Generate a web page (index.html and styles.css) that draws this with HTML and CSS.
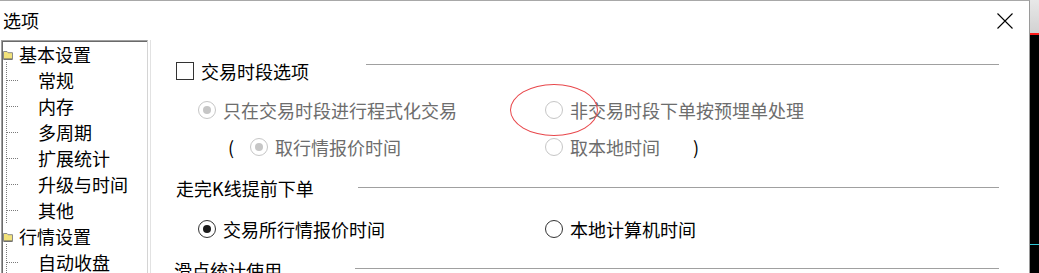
FILE: index.html
```html
<!DOCTYPE html>
<html lang="zh-CN">
<head>
<meta charset="utf-8">
<title>选项</title>
<link rel="stylesheet" href="styles.css">
</head>
<body>
<div class="screen">
  <div class="window">
    <header class="titlebar">
      <span class="title">选项</span>
      <span class="close">
        <svg width="16" height="16" viewBox="0 0 16 16"><path d="M0.5 0.5 L15.5 15.5 M15.5 0.5 L0.5 15.5" stroke="#000" stroke-width="1.1" fill="none"/></svg>
      </span>
    </header>
    <div class="main">
      <div class="tree-wrap">
        <div class="tree">
          <div class="node">
            <svg class="folder" width="10" height="10" viewBox="0 0 10 10"><path d="M0.5 1.5h3.5l1 1.2h4.5v6.8h-9z" fill="#f2e27a" stroke="#8a8a8a" stroke-width="1"/><path d="M1 9h8" stroke="#5a5a5a"/></svg>
            <span>基本设置</span>
          </div>
          <ul class="children">
            <li>常规</li>
            <li>内存</li>
            <li>多周期</li>
            <li>扩展统计</li>
            <li>升级与时间</li>
            <li>其他</li>
          </ul>
          <div class="node">
            <svg class="folder" width="10" height="10" viewBox="0 0 10 10"><path d="M0.5 1.5h3.5l1 1.2h4.5v6.8h-9z" fill="#f2e27a" stroke="#8a8a8a" stroke-width="1"/><path d="M1 9h8" stroke="#5a5a5a"/></svg>
            <span>行情设置</span>
          </div>
          <ul class="children">
            <li>自动收盘</li>
          </ul>
        </div>
      </div>
      <div class="content">
        <div class="group-head g1">
          <span class="checkbox"></span>
          <span class="head-label hl1">交易时段选项</span>
          <span class="rule"></span>
        </div>
        <div class="opt-row ra">
          <div class="opt"><span class="radio disabled checked"></span><span class="lbl disabled">只在交易时段进行程式化交易</span></div>
          <div class="opt"><span class="radio disabled"></span><span class="lbl disabled">非交易时段下单按预埋单处理</span></div>
        </div>
        <div class="opt-row rb">
          <div class="opt"><span class="paren open">(</span><span class="radio disabled checked"></span><span class="lbl disabled">取行情报价时间</span></div>
          <div class="opt"><span class="radio disabled"></span><span class="lbl disabled">取本地时间</span><span class="paren close-p">)</span></div>
        </div>
        <div class="group-head g2">
          <span class="head-label hl2">走完K线提前下单</span>
          <span class="rule"></span>
        </div>
        <div class="opt-row rc">
          <div class="opt"><span class="radio checked"></span><span class="lbl">交易所行情报价时间</span></div>
          <div class="opt"><span class="radio"></span><span class="lbl">本地计算机时间</span></div>
        </div>
        <div class="group-head g3">
          <span class="head-label hl3">滑点统计使用</span>
          <span class="rule"></span>
        </div>
        <div class="annot"></div>
      </div>
    </div>
  </div>
  <div class="backdrop">
    <div class="bd-top"></div>
    <div class="bd-red"></div>
    <div class="bd-black b1"></div>
    <div class="bd-cyan"></div>
    <div class="bd-black b2"></div>
  </div>
</div>
</body>
</html>
```
FILE: styles.css
```css
* { box-sizing: border-box; }
html, body {
  margin: 0;
  padding: 0;
  width: 1039px;
  height: 273px;
  overflow: hidden;
  background: #fff;
}
body {
  font-family: "Noto Sans CJK SC", "Microsoft YaHei", sans-serif;
  font-size: 18px;
  color: #000;
}
.screen {
  display: flex;
  width: 1039px;
  height: 273px;
}
.window {
  width: 1030px;
  flex: 0 0 1030px;
  height: 273px;
  border-top: 1px solid #a8a8a8;
  border-right: 1px solid #9a9a9a;
  background: #fff;
  display: flex;
  flex-direction: column;
}
.titlebar {
  height: 39px;
  flex: 0 0 39px;
  display: flex;
  align-items: center;
  justify-content: space-between;
  padding-left: 3px;
  padding-right: 16px;
}
.title {
  line-height: 26px;
  margin-top: -2px;
}
.close {
  display: flex;
  width: 16px;
  height: 16px;
  margin-top: 0px;
}
.main {
  flex: 1;
  display: flex;
  min-height: 0;
}
.tree-wrap {
  margin-left: 1px;
  width: 150px;
  flex: 0 0 150px;
  padding-right: 2px;
  border-right: 1px solid #e2e2e2;
}
.tree {
  width: 147px;
  height: 100%;
  border-top: 1px solid #a0a0a0;
  border-left: 1px solid #a0a0a0;
  border-right: 1px solid #d4d4d4;
  box-shadow: inset 1px 1px 0 #6a6a6a;
  overflow: hidden;
}
.node {
  height: 26px;
  display: flex;
  align-items: center;
  line-height: 26px;
}
.folder {
  margin-left: 1px;
  margin-right: 6px;
  margin-top: 2px;
  flex: 0 0 10px;
}
.children {
  list-style: none;
  margin: -5px 0 0 4px;
  padding: 5px 0 0 0;
  border-left: 1px dotted #7a7a7a;
}
.children li {
  position: relative;
  height: 26px;
  line-height: 26px;
  padding-left: 31px;
  white-space: nowrap;
}
.children li::before {
  content: "";
  position: absolute;
  left: 0;
  top: 13px;
  width: 11px;
  border-top: 1px dotted #7a7a7a;
}
.content {
  position: relative;
  flex: 1;
  padding-top: 18px;
  padding-right: 30px;
}
.group-head {
  display: flex;
  height: 26px;
  line-height: 26px;
  align-items: center;
  white-space: nowrap;
}
.g1 { padding-left: 25px; }
.g2 { padding-left: 25px; margin-top: 15px; }
.g3 { padding-left: 23px; margin-top: 15px; }
.checkbox {
  width: 18px;
  height: 18px;
  flex: 0 0 18px;
  border: 1px solid #333;
  background: #fff;
  margin-right: 7px;
}
.head-label { flex: 0 0 auto; }
.hl1 { width: 165px; }
.hl2 { width: 182px; }
.hl3 { width: 181px; }
.rule {
  flex: 1;
  height: 1px;
  background: #a0a0a0;
  align-self: flex-start;
}
.g1 .rule { margin-top: 6px; }
.g2 .rule { margin-top: 12px; }
.g3 .rule { margin-top: 11px; }
.opt-row {
  display: grid;
  grid-template-columns: 347px 1fr;
  padding-left: 47px;
  height: 26px;
  line-height: 26px;
  white-space: nowrap;
}
.ra { margin-top: 13px; }
.rb { margin-top: 11px; }
.rc { margin-top: 15px; }
.opt {
  display: flex;
  align-items: center;
}
.radio {
  position: relative;
  width: 18px;
  height: 18px;
  flex: 0 0 18px;
  border-radius: 50%;
  border: 1px solid #333;
  background: #fff;
  margin-right: 7px;
}
.radio.checked::after {
  content: "";
  position: absolute;
  left: 4px;
  top: 4px;
  width: 8px;
  height: 8px;
  border-radius: 50%;
  background: #1a1a1a;
}
.radio.disabled { border-color: #c6c6c6; }
.radio.disabled.checked::after { background: #c6c6c6; }
.lbl.disabled { color: #6d6d6d; }
.paren { display: inline-block; }
.paren.open { margin-left: 30px; width: 22px; }
.paren.close-p { margin-left: 33px; }
.annot {
  position: absolute;
  left: 359px;
  top: 44px;
  width: 88px;
  height: 52px;
  border: 1px solid #e8484c;
  border-radius: 50%;
}
.backdrop {
  flex: 0 0 9px;
  width: 9px;
  height: 273px;
  display: flex;
  flex-direction: column;
}
.bd-top {
  height: 33px;
  flex: 0 0 33px;
  background: linear-gradient(#e8e8e8, #d2d2d2);
}
.bd-red { height: 2px; flex: 0 0 2px; background: #ff1a1a; }
.bd-black { background: #000; }
.b1 { height: 209px; flex: 0 0 209px; }
.bd-cyan { height: 1px; flex: 0 0 1px; background: #30c8d8; }
.b2 { flex: 1; }
```
